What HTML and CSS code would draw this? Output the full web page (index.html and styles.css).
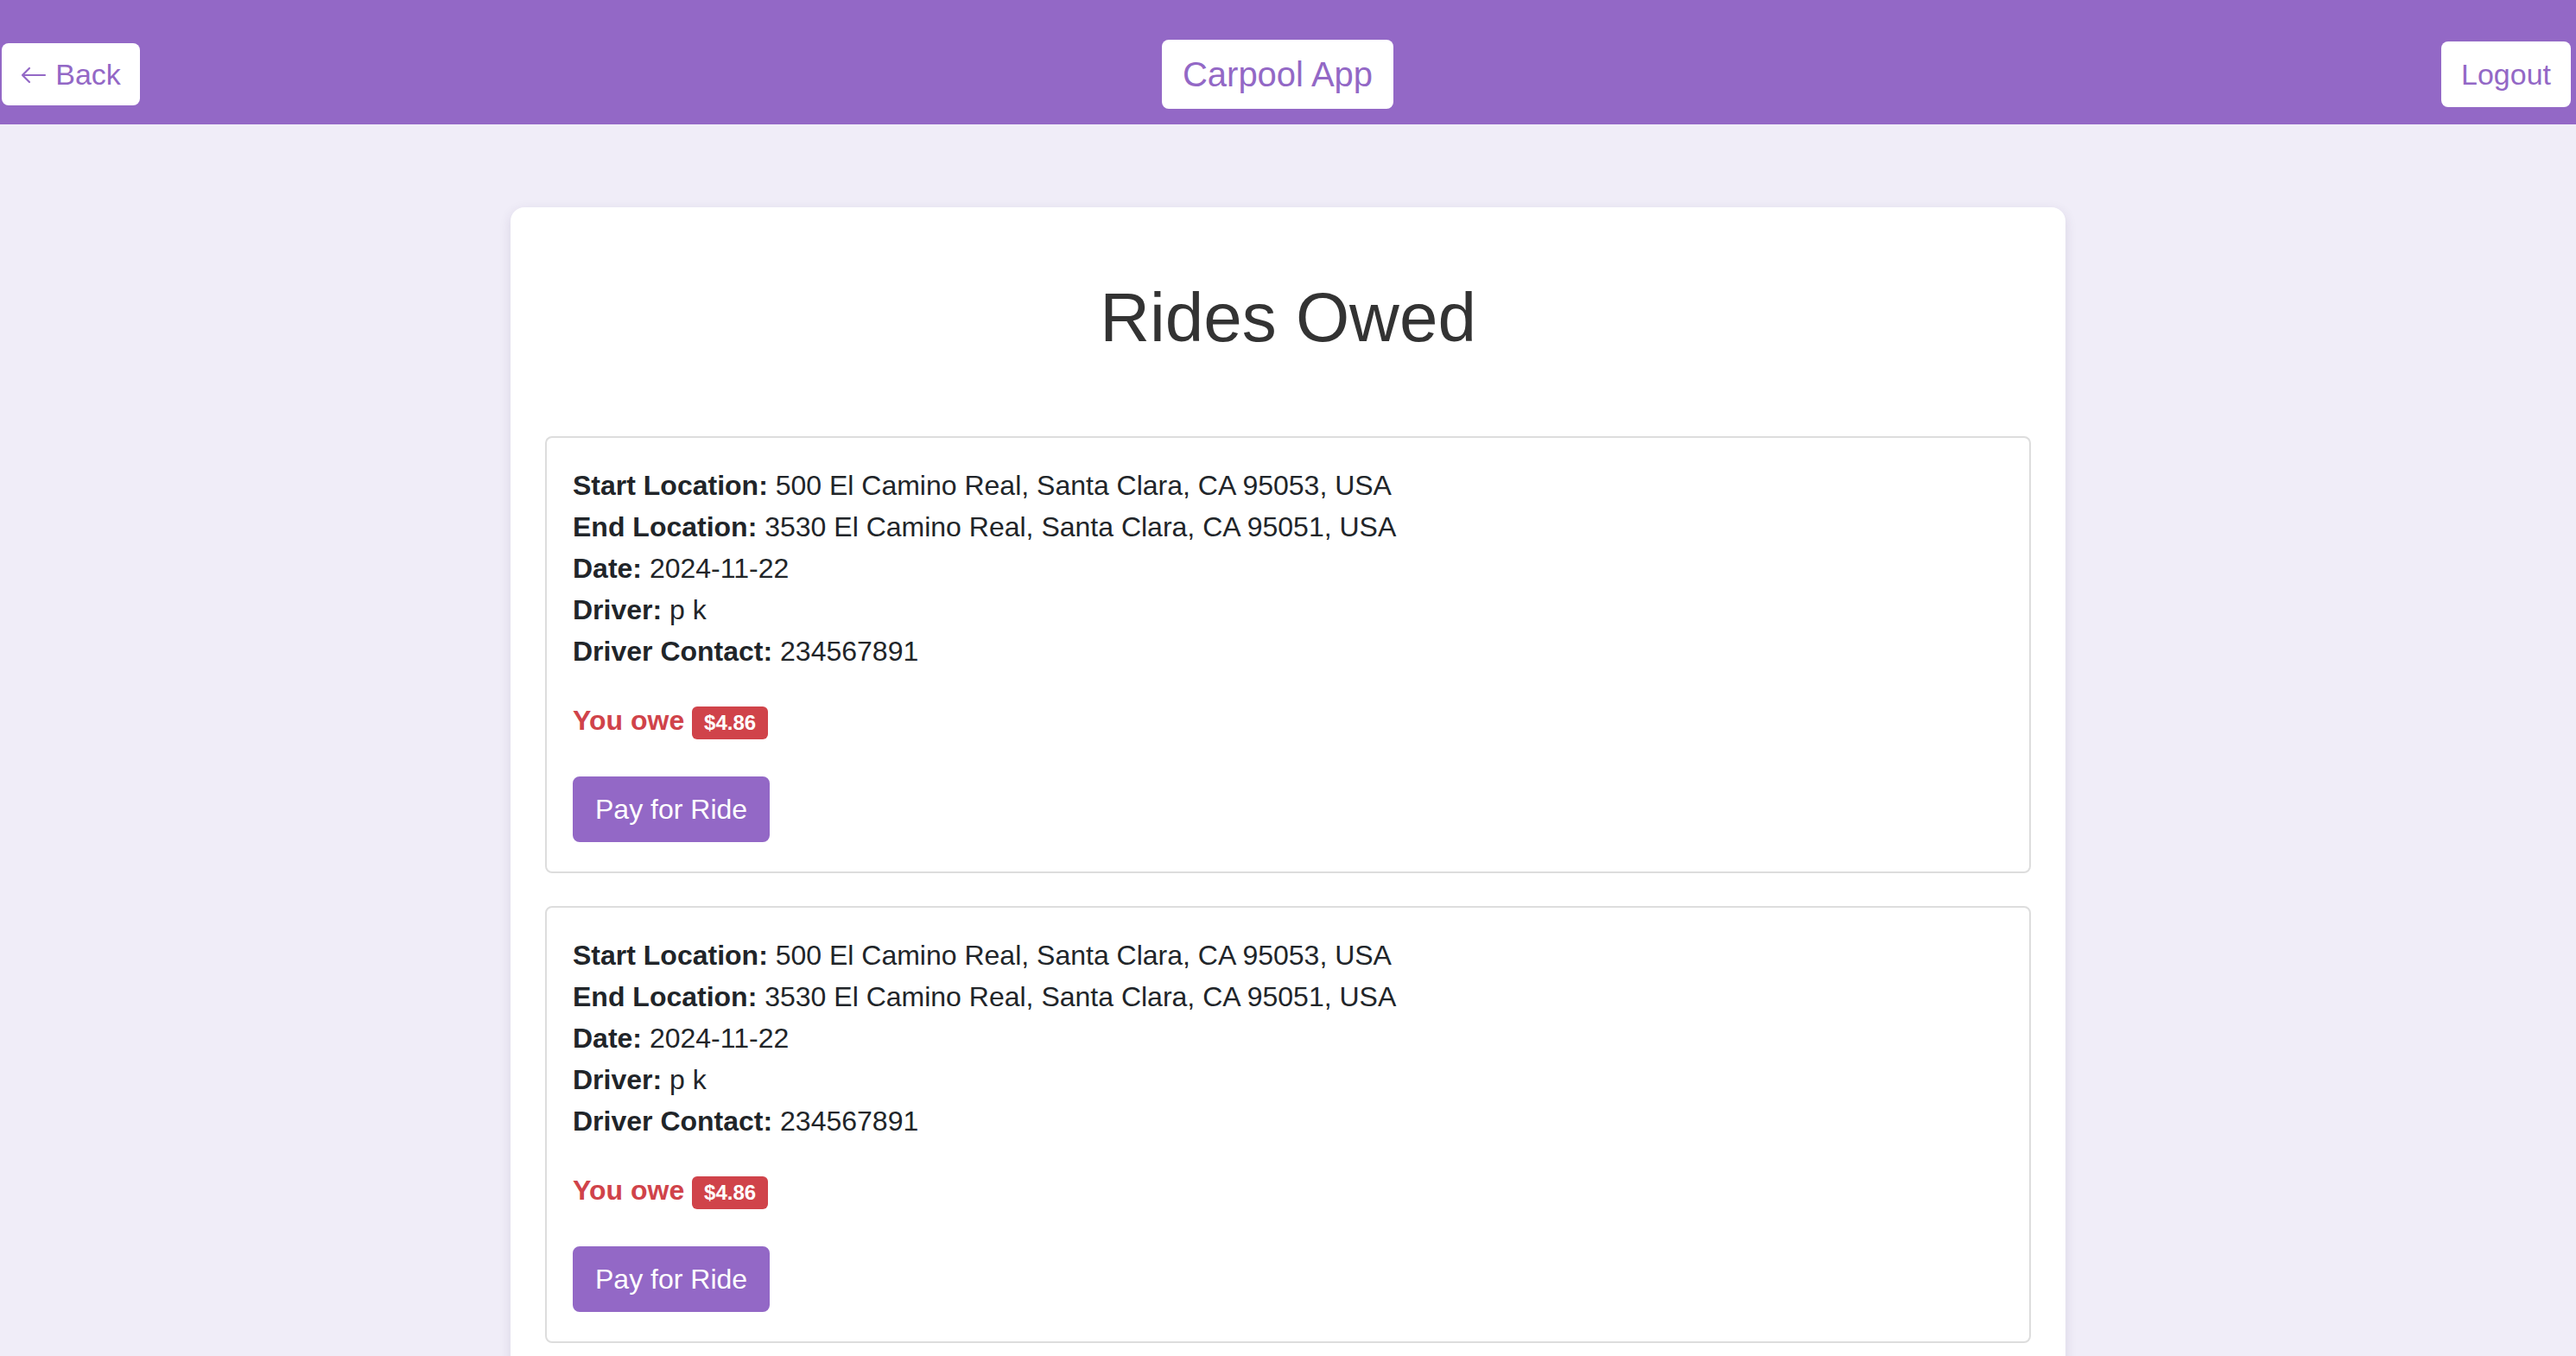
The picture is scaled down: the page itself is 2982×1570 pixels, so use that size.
FILE: index.html
```html
<!DOCTYPE html>
<html lang="en">
<head>
<meta charset="utf-8">
<title>Carpool App - Rides Owed</title>
<link rel="stylesheet" href="styles.css">
</head>
<body>
<header class="topbar">
  <button class="nav-btn back-btn" type="button"><svg class="back-icon" viewBox="0 0 30 20" width="30" height="20" aria-hidden="true"><path d="M28 10H2M10 2L2 10l8 8" fill="none" stroke="currentColor" stroke-width="2.2" stroke-linecap="round" stroke-linejoin="round"/></svg>Back</button>
  <div class="brand">Carpool App</div>
  <button class="nav-btn logout-btn" type="button">Logout</button>
</header>
<main class="page">
  <section class="panel">
    <h1 class="panel-title">Rides Owed</h1>
    <div class="ride-list">
      <article class="ride-card">
        <div class="ride-details">
          <p><strong>Start Location:</strong> 500 El Camino Real, Santa Clara, CA 95053, USA</p>
          <p><strong>End Location:</strong> 3530 El Camino Real, Santa Clara, CA 95051, USA</p>
          <p><strong>Date:</strong> 2024-11-22</p>
          <p><strong>Driver:</strong> p k</p>
          <p><strong>Driver Contact:</strong> 234567891</p>
        </div>
        <p class="owe">You owe <span class="badge">$4.86</span></p>
        <button class="pay-btn" type="button">Pay for Ride</button>
      </article>
      <article class="ride-card">
        <div class="ride-details">
          <p><strong>Start Location:</strong> 500 El Camino Real, Santa Clara, CA 95053, USA</p>
          <p><strong>End Location:</strong> 3530 El Camino Real, Santa Clara, CA 95051, USA</p>
          <p><strong>Date:</strong> 2024-11-22</p>
          <p><strong>Driver:</strong> p k</p>
          <p><strong>Driver Contact:</strong> 234567891</p>
        </div>
        <p class="owe">You owe <span class="badge">$4.86</span></p>
        <button class="pay-btn" type="button">Pay for Ride</button>
      </article>
    </div>
  </section>
</main>
</body>
</html>
```

FILE: styles.css
```css
* {
  box-sizing: border-box;
}

html, body {
  margin: 0;
  padding: 0;
}

body {
  background: #f0edf8;
  font-family: "Liberation Sans", Arial, Helvetica, sans-serif;
  color: #212529;
  font-size: 32px;
  line-height: 48px;
}

.topbar {
  height: 144px;
  background: #9368c6;
  display: flex;
  align-items: center;
  justify-content: space-between;
  padding: 28px 6px 0 2px;
}

.nav-btn {
  font-family: "Liberation Sans", Arial, Helvetica, sans-serif;
  background: #ffffff;
  color: #9368c6;
  border: none;
  border-radius: 8px;
  font-size: 34px;
  line-height: 40px;
  cursor: pointer;
  white-space: nowrap;
}

.back-btn {
  height: 72px;
  width: 160px;
  padding: 0 20px;
  display: flex;
  align-items: center;
  justify-content: center;
  gap: 10px;
}

.back-icon {
  display: block;
  width: 30px;
  height: 20px;
  margin-top: 2px;
}

.logout-btn {
  height: 76px;
  width: 150px;
  padding: 0 20px;
}

.brand {
  background: #ffffff;
  color: #9368c6;
  border-radius: 8px;
  font-size: 40px;
  line-height: 46px;
  padding: 17px 24px;
  white-space: nowrap;
  margin-right: 30px;
}

.page {
  padding: 96px 0 0;
}

.panel {
  max-width: 1800px;
  margin: 0 auto;
  background: #ffffff;
  border-radius: 16px;
  padding: 40px;
  box-shadow: 0 4px 14px rgba(60, 40, 90, 0.12);
}

.panel-title {
  margin: 42px 0 91px;
  font-size: 80px;
  line-height: 92px;
  font-weight: 400;
  color: #333333;
  text-align: center;
}

.ride-card {
  border: 2px solid #dddddd;
  border-radius: 8px;
  padding: 31px 30px 34px;
  margin-bottom: 38px;
}

.ride-details p {
  margin: 0;
}

.ride-details strong {
  font-weight: 700;
}

.owe {
  margin: 32px 0 0;
  color: #d0434a;
  font-weight: 700;
}

.badge {
  display: inline-block;
  background: #d0434a;
  color: #ffffff;
  font-size: 24px;
  line-height: 1;
  font-weight: 700;
  padding: 7px 14px;
  border-radius: 6px;
  vertical-align: baseline;
}

.pay-btn {
  display: block;
  margin-top: 41px;
  font-family: "Liberation Sans", Arial, Helvetica, sans-serif;
  background: #9368c6;
  color: #ffffff;
  border: 2px solid #9368c6;
  border-radius: 8px;
  font-size: 32px;
  line-height: 48px;
  padding: 12px 24px;
  cursor: pointer;
}
```
